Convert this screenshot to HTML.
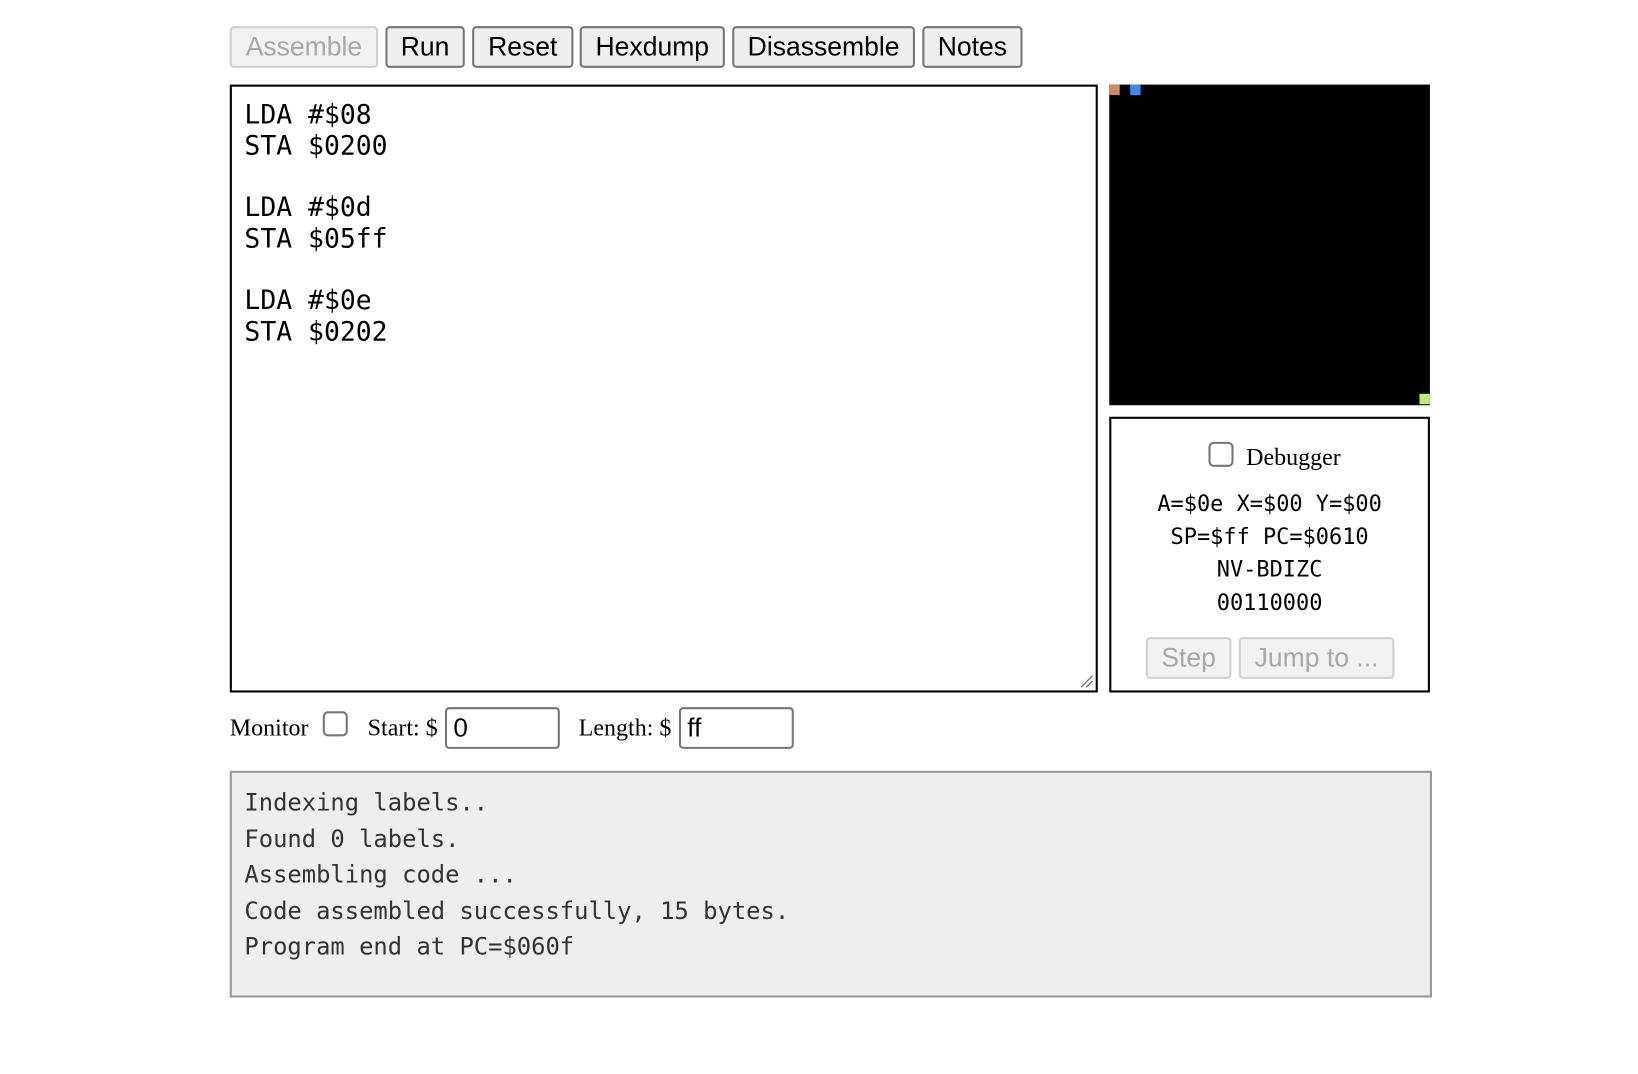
<!DOCTYPE html>
<html><head><meta charset="utf-8"><style>
body{margin:0;background:#fff;width:1638px;height:1074px;position:relative;overflow:hidden;font-family:"Liberation Serif",serif}
#w{position:absolute;left:0;top:0;width:1564px;height:1026px;transform:scale(1.0445);transform-origin:0 0}
.a{position:absolute;box-sizing:border-box}
.btn{position:absolute;box-sizing:border-box;top:25px;height:40px;border:2px solid #767676;border-radius:4px;background:#efefef;font:25.4px "Liberation Sans",sans-serif;color:#000;text-align:center;line-height:36px;white-space:nowrap}
.dis{border-color:#d0d0d0;color:#a8a8a8;background:#f2f2f2}
.mono{font-family:"DejaVu Sans Mono","Liberation Mono",monospace}
.cb{position:absolute;box-sizing:border-box;width:24px;height:24px;border:2px solid #767676;border-radius:5px;background:#fff}
.inp{position:absolute;box-sizing:border-box;height:40px;border:2px solid #767676;border-radius:4px;font:25px "Liberation Sans",sans-serif;padding-left:6px;line-height:36px}
</style></head><body><div id="w">
<div class="btn dis" style="left:220px;width:142px">Assemble</div>
<div class="btn" style="left:369px;width:76px">Run</div>
<div class="btn" style="left:452px;width:97px">Reset</div>
<div class="btn" style="left:555px;width:139px">Hexdump</div>
<div class="btn" style="left:701px;width:175px">Disassemble</div>
<div class="btn" style="left:883px;width:96px">Notes</div>

<div class="a mono" style="left:220px;top:81px;width:831px;height:582px;border:2px solid #000;padding:12px 0 0 12px;font-size:25.3px;line-height:29.7px;white-space:pre">LDA #$08
STA $0200

LDA #$0d
STA $05ff

LDA #$0e
STA $0202</div>
<svg class="a" style="left:1033px;top:645px" width="14" height="14"><path d="M2 13L13 2M7 13L13 7" stroke="#777" stroke-width="1.3"/></svg>

<div class="a" style="left:1062px;top:81px;width:307px;height:307px;background:#000"></div>
<div class="a" style="left:1062px;top:81px;width:10px;height:10px;background:#d08a58"></div>
<div class="a" style="left:1082px;top:81px;width:10px;height:10px;background:#3a8af0"></div>
<div class="a" style="left:1359px;top:377px;width:10px;height:10px;background:#b8f070"></div>

<div class="a" style="left:1062px;top:399px;width:307px;height:264px;border:2px solid #000"></div>
<div class="cb" style="left:1157px;top:423px"></div>
<div class="a" style="left:1193px;top:425px;font-size:23px">Debugger</div>
<div class="a mono" style="left:1062px;top:467px;width:307px;text-align:center;font-size:21px;line-height:31.7px">A=$0e X=$00 Y=$00<br>SP=$ff PC=$0610<br>NV-BDIZC<br>00110000</div>
<div class="btn dis" style="left:1097px;top:610px;width:82px">Step</div>
<div class="btn dis" style="left:1186px;top:610px;width:149px">Jump to ...</div>

<div class="a" style="left:220px;top:684px;font-size:23px">Monitor</div>
<div class="cb" style="left:309px;top:681px"></div>
<div class="a" style="left:352px;top:684px;font-size:23px">Start: $</div>
<div class="inp" style="left:426px;top:677px;width:110px">0</div>
<div class="a" style="left:554px;top:684px;font-size:23px">Length: $</div>
<div class="inp" style="left:650px;top:677px;width:110px">ff</div>

<div class="a mono" style="left:220px;top:738px;width:1151px;height:217px;background:#eee;border:2px solid #999;padding:12px 0 0 12px;font-size:22.8px;line-height:34.5px;color:#333;white-space:pre">Indexing labels..
Found 0 labels.
Assembling code ...
Code assembled successfully, 15 bytes.
Program end at PC=$060f</div>
</div></body></html>
